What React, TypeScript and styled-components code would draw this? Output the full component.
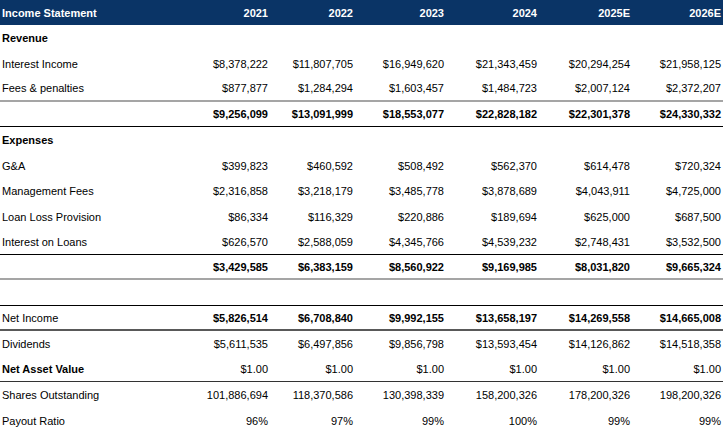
import React from "react";
import styled, { createGlobalStyle } from "styled-components";

const GlobalStyle = createGlobalStyle`
  body {
    margin: 0;
    background: #ffffff;
    font-family: "Liberation Sans", Arial, sans-serif;
    color: #000000;
  }
`;

const Sheet = styled.div`
  width: 723px;
  font-size: 11px;
`;

const HeadRow = styled.div`
  display: grid;
  grid-template-columns: 185px 85px 85px 91px 93px 93px 91px;
  height: 25px;
  background-color: #0a3466;
  color: #ffffff;
  font-weight: 700;
  align-items: center;
`;

const Row = styled.div<{ $h: number; $line?: string; $bold?: boolean }>`
  display: grid;
  grid-template-columns: 185px 85px 85px 91px 93px 93px 91px;
  box-sizing: border-box;
  height: ${(p) => p.$h}px;
  align-items: center;
  border-bottom: ${(p) => p.$line || "none"};
  font-weight: ${(p) => (p.$bold ? 700 : 400)};
`;

const Label = styled.div<{ $bold?: boolean }>`
  padding-left: 2px;
  white-space: nowrap;
  font-weight: ${(p) => (p.$bold ? 700 : 400)};
`;

const Num = styled.div`
  text-align: right;
  padding-right: 2px;
  white-space: nowrap;
`;

const GRAY = "2px solid #a5a5a5";
const BLACK = "1px solid #000000";
const DARK = "2px solid #595959";
const NAV = "1px solid #333333";

type Line = {
  label?: string;
  labelBold?: boolean;
  bold?: boolean;
  values?: string[];
  line?: string;
};

const years = ["2021", "2022", "2023", "2024", "2025E", "2026E"];

const lines: Line[] = [
  { label: "Revenue", labelBold: true },
  {
    label: "Interest Income",
    values: ["$8,378,222", "$11,807,705", "$16,949,620", "$21,343,459", "$20,294,254", "$21,958,125"],
  },
  {
    label: "Fees & penalties",
    values: ["$877,877", "$1,284,294", "$1,603,457", "$1,484,723", "$2,007,124", "$2,372,207"],
    line: GRAY,
  },
  {
    bold: true,
    values: ["$9,256,099", "$13,091,999", "$18,553,077", "$22,828,182", "$22,301,378", "$24,330,332"],
    line: BLACK,
  },
  { label: "Expenses", labelBold: true },
  {
    label: "G&A",
    values: ["$399,823", "$460,592", "$508,492", "$562,370", "$614,478", "$720,324"],
  },
  {
    label: "Management Fees",
    values: ["$2,316,858", "$3,218,179", "$3,485,778", "$3,878,689", "$4,043,911", "$4,725,000"],
  },
  {
    label: "Loan Loss Provision",
    values: ["$86,334", "$116,329", "$220,886", "$189,694", "$625,000", "$687,500"],
  },
  {
    label: "Interest on Loans",
    values: ["$626,570", "$2,588,059", "$4,345,766", "$4,539,232", "$2,748,431", "$3,532,500"],
    line: BLACK,
  },
  {
    bold: true,
    values: ["$3,429,585", "$6,383,159", "$8,560,922", "$9,169,985", "$8,031,820", "$9,665,324"],
    line: GRAY,
  },
  { line: BLACK },
  {
    label: "Net Income",
    bold: true,
    values: ["$5,826,514", "$6,708,840", "$9,992,155", "$13,658,197", "$14,269,558", "$14,665,008"],
    line: DARK,
  },
  {
    label: "Dividends",
    values: ["$5,611,535", "$6,497,856", "$9,856,798", "$13,593,454", "$14,126,862", "$14,518,358"],
  },
  {
    label: "Net Asset Value",
    labelBold: true,
    values: ["$1.00", "$1.00", "$1.00", "$1.00", "$1.00", "$1.00"],
    line: NAV,
  },
  {
    label: "Shares Outstanding",
    values: ["101,886,694", "118,370,586", "130,398,339", "158,200,326", "178,200,326", "198,200,326"],
  },
  {
    label: "Payout Ratio",
    values: ["96%", "97%", "99%", "100%", "99%", "99%"],
  },
];

export default function App() {
  return (
    <>
      <GlobalStyle />
      <Sheet>
        <HeadRow>
          <Label $bold>Income Statement</Label>
          {years.map((y) => (
            <Num key={y}>{y}</Num>
          ))}
        </HeadRow>
        {lines.map((l, i) => (
          <Row key={i} $h={i % 2 === 0 ? 26 : 25} $line={l.line} $bold={l.bold}>
            <Label $bold={l.labelBold}>{l.label}</Label>
            {(l.values || []).map((v, j) => (
              <Num key={j}>{v}</Num>
            ))}
          </Row>
        ))}
      </Sheet>
    </>
  );
}
